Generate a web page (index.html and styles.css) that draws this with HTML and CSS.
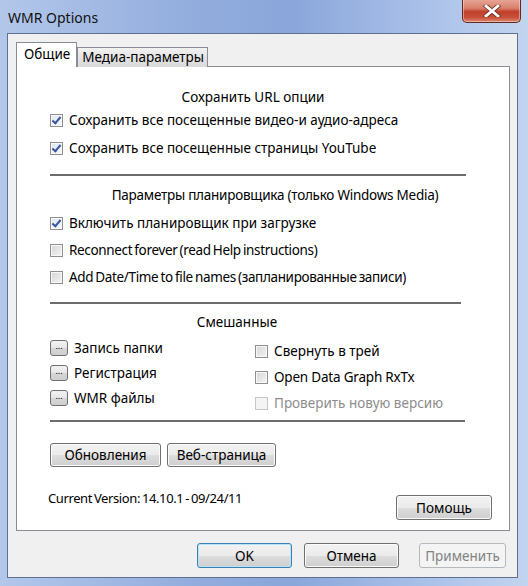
FILE: index.html
```html
<!DOCTYPE html>
<html>
<head>
  <meta charset="utf-8">
  <title>WMR Options</title>
  <link rel="stylesheet" href="styles.css">
</head>
<body>

<div class="window">

  <div class="titlebar">
    <span class="title">WMR Options</span>
    <div class="close">
      <svg width="18" height="12" viewBox="0 0 18 12">
        <path d="M3 1 L15 11 M15 1 L3 11" stroke="#6b2a20" stroke-width="4.4" stroke-linecap="square"/>
        <path d="M3 1 L15 11 M15 1 L3 11" stroke="#fff" stroke-width="2.8" stroke-linecap="square"/>
      </svg>
    </div>
  </div>

  <div class="client">

    <div class="tabs">
      <div class="tab active">Общие</div>
      <div class="tab">Медиа-параметры</div>
    </div>

    <div class="panel">

      <div class="heading h-url">Сохранить URL опции</div>
      <div class="check-row first"><span class="cb checked"></span>Сохранить все посещенные видео-и аудио-адреса</div>
      <div class="check-row"><span class="cb checked"></span>Сохранить все посещенные страницы YouTube</div>

      <div class="sep"></div>

      <div class="heading h-sched">Параметры планировщика (только Windows Media)</div>
      <div class="check-row"><span class="cb checked"></span>Включить планировщик при загрузке</div>
      <div class="check-row tight latin"><span class="cb"></span>Reconnect forever (read Help instructions)</div>
      <div class="check-row tight latin"><span class="cb"></span>Add Date/Time to file names (запланированные записи)</div>

      <div class="sep sep2"></div>

      <div class="heading h-misc">Смешанные</div>
      <div class="misc">
        <div class="misc-left">
          <div class="dots-row"><span class="dots">...</span>Запись папки</div>
          <div class="dots-row"><span class="dots">...</span>Регистрация</div>
          <div class="dots-row"><span class="dots">...</span>WMR файлы</div>
        </div>
        <div class="misc-right">
          <div class="check-row"><span class="cb"></span>Свернуть в трей</div>
          <div class="check-row narrow"><span class="cb"></span>Open Data Graph RxTx</div>
          <div class="check-row disabled"><span class="cb"></span>Проверить новую версию</div>
        </div>
      </div>

      <div class="sep sep3"></div>

      <div class="link-buttons">
        <button class="btn btn-upd">Обновления</button>
        <button class="btn btn-web">Веб-страница</button>
      </div>

      <div class="version-row">
        <span class="version">Current Version: 14.10.1 - 09/24/11</span>
        <button class="btn btn-help">Помощь</button>
      </div>

    </div>

    <div class="footer">
      <button class="btn btn-dlg focused">OK</button>
      <button class="btn btn-dlg">Отмена</button>
      <button class="btn btn-apply" disabled>Применить</button>
    </div>

  </div>
</div>

</body>
</html>
```

FILE: styles.css
```css
body {
    margin: 0;
    font-family: "Noto Sans", "DejaVu Sans", sans-serif;
    font-size: 13.5px;
    color: #000;
}
.window {
    width: 528px;
    height: 586px;
    box-sizing: border-box;
    background: linear-gradient(to right, #b3c7ea 0%, #93addd 35%, #8aa6da 55%, #a9c0e8 80%, #c3d4ef 100%);
    display: flex;
    flex-direction: column;
}
.titlebar {
    height: 33px;
    position: relative;
    flex-shrink: 0;
}
.title {
    position: absolute;
    left: 8px;
    top: 8px;
    font-size: 14px;
    color: #111;
}
.close {
    position: absolute;
    left: 462px;
    top: -1px;
    width: 57px;
    height: 23px;
    border: 1px solid #5e2a22;
    border-top: none;
    border-radius: 0 0 5px 5px;
    background: linear-gradient(#e8a89a 0%, #d8806c 40%, #c0402a 55%, #c8503a 80%, #dc8a72 100%);
    box-shadow: inset 0 0 0 1px rgba(255, 220, 210, 0.5);
    display: flex;
    align-items: center;
    justify-content: center;
}
.client {
    margin: 0 10px 8px 7px;
    flex: 1;
    background: #f0f0f0;
    border: 1px solid #5f6f90;
    padding: 9px 7px 0 8px;
    display: flex;
    flex-direction: column;
}

/* tabs */
.tabs {
    display: flex;
    align-items: flex-end;
    height: 24px;
    position: relative;
    z-index: 1;
}
.tab {
    height: 19px;
    line-height: 18px;
    padding: 0 3px 0 4px;
    border: 1px solid #898c95;
    border-bottom: none;
    background: linear-gradient(#f2f2f2, #e3e3e3 50%, #d9d9d9);
    white-space: nowrap;
}
.tab.active {
    height: 24px;
    line-height: 22px;
    background: #fff;
    padding: 0 6px 0 7px;
    margin-right: -1px;
    position: relative;
    z-index: 2;
}
.tab + .tab {
    margin-left: 1px;
}
.panel {
    background: #fff;
    border: 1px solid #898c95;
    height: 465px;
    box-sizing: border-box;
    margin-top: -1px;
    padding: 20px 17px 0 33px;
    display: flex;
    flex-direction: column;
}
.heading {
    height: 20px;
    line-height: 20px;
    text-align: center;
    width: 416px;
    white-space: nowrap;
}
.h-url {
    margin-left: -5px;
}
.h-sched {
    margin-left: 17px;
    letter-spacing: -0.25px;
}
.h-misc {
    margin-left: -21px;
}
.check-row {
    height: 20px;
    line-height: 20px;
    display: flex;
    align-items: center;
    white-space: nowrap;
    margin-top: 8px;
}
.check-row.latin {
    letter-spacing: -0.35px;
    word-spacing: -1px;
}
.check-row.narrow {
    letter-spacing: -0.2px;
}
.check-row.first {
    margin-top: 3px;
}
.check-row.tight {
    margin-top: 7px;
}
.cb {
    width: 11px;
    height: 11px;
    border: 1px solid #8f8f8f;
    margin-right: 6px;
    flex-shrink: 0;
    background: linear-gradient(135deg, #d6d6d6, #f4f4f4);
    box-shadow: inset 0 0 0 1px #f8f8f8;
    position: relative;
    letter-spacing: 0;
}
.cb.checked {
    background: linear-gradient(135deg, #dfe6f2, #f6f8fc);
}
.cb.checked::after {
    content: "";
    position: absolute;
    left: 3px;
    top: 0px;
    width: 3px;
    height: 7px;
    border: solid #3a55a0;
    border-width: 0 2px 2px 0;
    transform: rotate(40deg);
}
.check-row.disabled {
    color: #8d8d8d;
}
.check-row.disabled .cb {
    border-color: #c6c6c6;
    background: #f4f4f4;
    box-shadow: none;
}
.sep {
    height: 2px;
    width: 416px;
    background: #6d6d6d;
    margin-top: 16px;
    margin-bottom: 9px;
}
.sep2 {
    width: 411px;
    margin-top: 15px;
    margin-bottom: 8px;
}
.sep3 {
    width: 415px;
    margin-top: 0;
    margin-bottom: 0;
}

/* misc section */
.misc {
    display: flex;
    height: 88px;
}
.misc-left {
    width: 205px;
    padding-top: 6px;
    display: flex;
    flex-direction: column;
    gap: 5px;
}
.dots-row {
    height: 20px;
    line-height: 20px;
    display: flex;
    align-items: center;
}
.dots {
    width: 16px;
    height: 14px;
    border: 1px solid #707070;
    border-radius: 3px;
    background: linear-gradient(#f2f2f2, #e6e6e6 50%, #d6d6d6 51%, #cfcfcf);
    font-size: 9px;
    line-height: 10px;
    text-align: center;
    margin-right: 6px;
    flex-shrink: 0;
}
.misc-right {
    padding-top: 9px;
}
.misc-right .check-row {
    margin-top: 6px;
}
.misc-right .check-row:first-child {
    margin-top: 0;
}

/* buttons */
.btn {
    font-family: inherit;
    font-size: 13.5px;
    color: #000;
    height: 24px;
    padding: 0;
    border: 1px solid #707070;
    border-radius: 3px;
    background: linear-gradient(#f2f2f2 0%, #ebebeb 50%, #dddddd 51%, #cfcfcf 100%);
    box-shadow: inset 0 0 0 1px #fbfbfb;
}
.link-buttons {
    display: flex;
    gap: 6px;
    margin-top: 21px;
}
.btn-upd {
    width: 111px;
}
.btn-web {
    width: 109px;
}
.version-row {
    display: flex;
    justify-content: space-between;
    margin-top: 21px;
}
.version {
    height: 20px;
    line-height: 20px;
    margin-left: -2px;
    font-size: 13px;
    letter-spacing: -0.4px;
    word-spacing: -1px;
}
.btn-help {
    width: 96px;
    height: 25px;
    margin-top: 7px;
}
.footer {
    display: flex;
    justify-content: flex-end;
    padding: 12px 4px 0 0;
}
.btn-dlg {
    width: 95px;
    height: 25px;
    margin-right: 12px;
}
.btn-dlg.focused {
    border-color: #3c7fb1;
    box-shadow: inset 0 0 0 1px #b6e3fa;
}
.btn-apply {
    width: 87px;
    height: 25px;
    margin-left: 8px;
    color: #838383;
    border-color: #b5b9bc;
    background: #f4f4f4;
    box-shadow: none;
}
```
